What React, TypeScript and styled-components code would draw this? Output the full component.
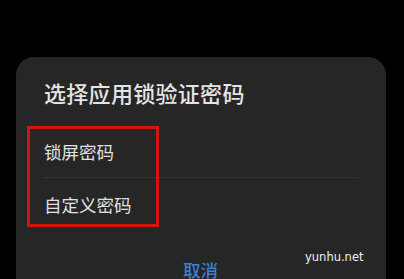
import React from "react";
import styled, { createGlobalStyle } from "styled-components";

const Global = createGlobalStyle`
  html, body { margin: 0; padding: 0; background: #000; }
  body { width: 404px; height: 279px; overflow: hidden; font-family: "Noto Sans CJK SC", "Noto Sans", sans-serif; }
`;

const Screen = styled.div`
  position: relative;
  width: 404px;
  height: 279px;
  background: #000;
  padding-top: 57px;
  box-sizing: border-box;
  overflow: hidden;
`;

const Card = styled.div`
  margin-left: 16px;
  width: 370px;
  height: 260px;
  box-sizing: border-box;
  background: #262626;
  border-radius: 18px;
  padding: 24px 28px 0 27px;
  display: flex;
  flex-direction: column;
`;

const Title = styled.div`
  font-size: 22px;
  line-height: 22px;
  font-weight: 500;
  color: #e4e4e4;
  padding-left: 1px;
  letter-spacing: 0.3px;
`;

const List = styled.div`
  margin-top: 23px;
  display: flex;
  flex-direction: column;
`;

const Row = styled.div<{ $h: number }>`
  height: ${(p) => p.$h}px;
  display: flex;
  align-items: center;
  padding-left: 1px;
  font-size: 17.5px;
  color: #e0e0e0;
`;

const Divider = styled.div`
  height: 1px;
  background: #343434;
`;

const Footer = styled.div`
  margin-top: 31px;
  display: flex;
  justify-content: center;
  font-size: 17.5px;
  line-height: 18px;
  font-weight: 500;
  color: #3b7fd0;
`;

const Highlight = styled.div`
  position: absolute;
  left: 27px;
  top: 126px;
  width: 132px;
  height: 101px;
  box-sizing: border-box;
  border: 3px solid #d41414;
`;

const Watermark = styled.div`
  position: absolute;
  left: 305px;
  top: 250px;
  font-family: "DejaVu Sans", sans-serif;
  font-size: 11.5px;
  color: #efefef;
`;

export default function App() {
  return (
    <>
      <Global />
      <Screen>
        <Card>
          <Title>选择应用锁验证密码</Title>
          <List>
            <Row $h={51}>锁屏密码</Row>
            <Divider />
            <Row $h={52}>自定义密码</Row>
          </List>
          <Footer>取消</Footer>
        </Card>
        <Highlight />
        <Watermark>yunhu.net</Watermark>
      </Screen>
    </>
  );
}
